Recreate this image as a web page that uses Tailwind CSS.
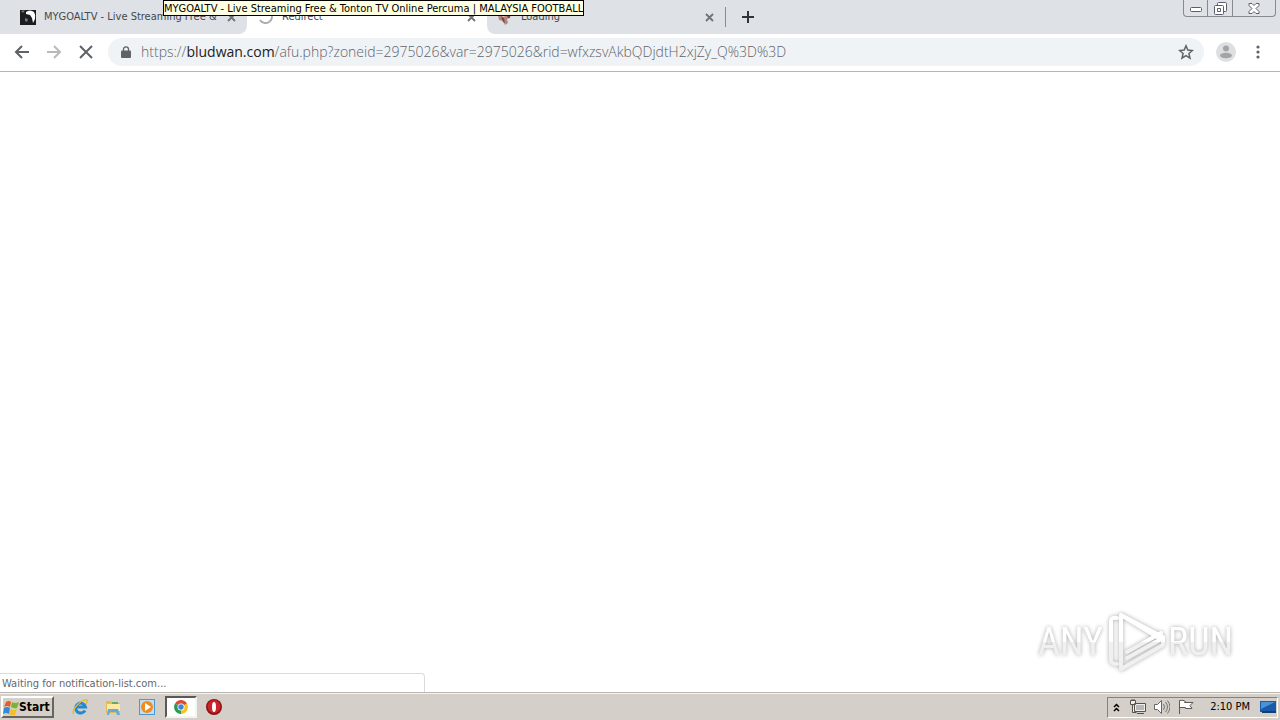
<!DOCTYPE html>
<html lang="en">
<head>
<meta charset="utf-8">
<title>Redirect</title>
<script src="https://cdn.jsdelivr.net/npm/@tailwindcss/browser@4"></script>
</head>
<body class="flex h-screen flex-col overflow-hidden bg-white font-['DejaVu_Sans_Condensed','DejaVu_Sans',sans-serif] text-[11px] text-black">
<header class="relative shrink-0">
  <div class="flex h-[34px] bg-white text-[#45494e]">
    <div class="flex w-[247px] shrink-0 items-center rounded-br-lg bg-[#dee1e6] pr-2 pl-5">
      <svg class="mr-2 size-4 shrink-0" viewBox="0 0 16 16"><path fill="#1b1d20" d="M0 1h16v15H0z"/><path fill="#fff" d="M6 3q4-3 8 0 2 3 1 7l-2 4-1-5-2-3-4-1z"/><path fill="#777" d="M1 2l4-1-2 3zM5 9l3 1-1 3-2-1z"/></svg>
      <span class="pt-px whitespace-nowrap">MYGOALTV - Live Streaming Free &amp;</span>
      <button aria-label="Close tab" class="ml-auto p-[3px]"><svg class="size-[9px]" viewBox="0 0 9 9"><path d="M1 1l7 7M8 1L1 8" stroke="#6f7378" stroke-width="1.800"/></svg></button>
    </div>
    <div class="flex w-60 shrink-0 items-center pr-2 pl-[11px]">
      <svg class="mr-2 size-4 shrink-0" viewBox="0 0 16 16"><path d="M13 4a6.200 6.200 0 0 1-11 7" fill="none" stroke="#a9adb1" stroke-width="2"/></svg>
      <span class="pt-px">Redirect</span>
      <button aria-label="Close tab" class="ml-auto p-[3px]"><svg class="size-[9px]" viewBox="0 0 9 9"><path d="M1 1l7 7M8 1L1 8" stroke="#6f7378" stroke-width="1.800"/></svg></button>
    </div>
    <div class="flex min-w-0 grow rounded-bl-lg bg-[#dee1e6]">
      <div class="flex w-[238px] shrink-0 items-center pr-2 pl-[10px]">
        <svg class="mr-2 size-4 shrink-0" viewBox="0 0 16 16"><path fill="#b9857f" d="M1 6l4-4 9 3-1 4-3 1 1 4-3 2-2-4-4-1z"/><path fill="#784d50" d="M4 8l3 1 1 5-2-1zM10 7h3v2h-2z"/><path fill="#ead4d3" d="M5 6l3-2 1 3-3 1z"/></svg>
        <span class="pt-px">Loading</span>
        <button aria-label="Close tab" class="ml-auto p-[3px]"><svg class="size-[9px]" viewBox="0 0 9 9"><path d="M1 1l7 7M8 1L1 8" stroke="#6f7378" stroke-width="1.800"/></svg></button>
      </div>
      <div class="my-[7px] w-px bg-[#898c90]"></div>
      <button aria-label="New tab" class="ml-4"><svg class="size-3" viewBox="0 0 12 12"><path d="M6 0v12M0 6h12" stroke="#303338" stroke-width="2"/></svg></button>
      <div class="mr-1 ml-auto flex h-[17px] rounded-b border border-t-0 border-[#878a91]">
        <button aria-label="Minimize" class="flex w-6 items-center justify-center border-r border-[#878a91]"><svg class="mt-[3px] h-[5px] w-3" viewBox="0 0 12 5"><rect x=".5" y=".5" width="11" height="4" rx="1" fill="#fff" stroke="#5b5f6b"/></svg></button>
        <button aria-label="Restore" class="flex w-[25px] items-center justify-center border-r border-[#878a91]"><svg class="size-[14px]" viewBox="0 0 14 14"><g fill="#fff" stroke="#5b5f6b"><rect x="4.500" y="1.500" width="9" height="9" rx="1"/><rect x="1.500" y="4.500" width="9" height="9" rx="1"/><path d="M4.500 7.500h3v3h-3z"/></g></svg></button>
        <button aria-label="Close" class="flex w-[42px] items-center justify-center"><svg class="h-[11px] w-3" viewBox="0 0 12 11"><path d="M1 .5h3l2 2 2-2h3v2l-3 3 3 3v2H8l-2-2-2 2H1v-2l3-3-3-3z" fill="#fff" stroke="#5b5f6b"/></svg></button>
      </div>
    </div>
  </div>
  <div class="flex h-[38px] items-center border-b border-[#b5b5b5] px-[14px] pb-px">
    <button aria-label="Back" class="mr-4"><svg class="size-4" viewBox="0 0 16 16"><path d="M15 8H2M8 2L2 8l6 6" fill="none" stroke="#5f6266" stroke-width="2"/></svg></button>
    <button aria-label="Forward" class="mr-4"><svg class="size-4" viewBox="0 0 16 16"><path d="M1 8h13M8 2l6 6-6 6" fill="none" stroke="#b8babc" stroke-width="2"/></svg></button>
    <button aria-label="Stop" class="mr-[14px]"><svg class="size-4" viewBox="0 0 16 16"><path d="M2 2l12 12M14 2L2 14" stroke="#5f6266" stroke-width="2"/></svg></button>
    <div class="flex h-7 min-w-0 grow items-center rounded-full bg-[#f0f3f5] pr-[10px] pl-[13px]">
      <svg class="mr-[10px] h-3 w-[10px]" viewBox="0 0 10 12"><path fill="#5f6368" d="M1 4.500h8q1 0 1 1V11q0 1-1 1H1q-1 0-1-1V5.500q0-1 1-1"/><path d="M2.500 5V3.300a2.500 2.500 0 0 1 5 0V5" fill="none" stroke="#5f6368" stroke-width="1.300"/></svg>
      <a href="#" class="grow font-['Open_Sans',sans-serif] text-[14px] leading-5 font-light whitespace-nowrap text-[#5f6469]">https://<span class="font-normal text-[#202124]">bludwan.com</span>/afu.php?zoneid=2975026&amp;var=2975026&amp;rid=wfxzsvAkbQDjdtH2xjZy_Q%3D%3D</a>
      <button aria-label="Bookmark this page"><svg class="size-4" viewBox="0 0 16 16"><path d="M8 1.800l1.800 4.300 4.600.4-3.500 3 1.100 4.600L8 11.700l-4 2.400 1.100-4.600-3.500-3 4.600-.4z" fill="none" stroke="#5f6266" stroke-width="1.500"/></svg></button>
    </div>
    <button aria-label="Profile" class="ml-3"><svg class="size-5" viewBox="0 0 20 20"><circle cx="10" cy="10" r="10" fill="#dddfe0"/><circle cx="10" cy="6.500" r="3" fill="#a2a5a8"/><ellipse cx="10" cy="13.500" rx="6" ry="2.800" fill="#a2a5a8"/></svg></button>
    <button aria-label="Menu" class="ml-[14px]"><svg class="h-[14px] w-4" viewBox="0 0 16 14"><g fill="#5f6266"><circle cx="8" cy="2" r="1.600"/><circle cx="8" cy="7" r="1.600"/><circle cx="8" cy="12" r="1.600"/></g></svg></button>
  </div>
  <div role="tooltip" class="absolute top-0 left-[163px] h-4 border border-black bg-[#ffffe1] leading-[15px] whitespace-nowrap">MYGOALTV - Live Streaming Free &amp; Tonton TV Online Percuma | MALAYSIA FOOTBALL</div>
</header>
<main class="relative min-h-0 grow bg-white">
  <div role="status" class="absolute bottom-0 left-0 h-[19px] w-[425px] rounded-tr border-t border-r border-[#d9dbdd] bg-white pl-[2px] leading-[19px] text-[#65686c]">Waiting for notification-list.com...</div>
  <svg role="img" aria-label="ANY RUN" class="absolute right-10 bottom-4 h-[70px] w-[210px] drop-shadow-[0_0_2px_#aaaaaa]" viewBox="0 0 210 70">
    <defs><linearGradient id="silver" gradientUnits="userSpaceOnUse" x1="0" y1="0" x2="0" y2="70"><stop offset=".51" stop-color="#fff"/><stop offset=".52" stop-color="#f0f0f0"/></linearGradient></defs>
    <g fill="url(#silver)" font-size="38" class="font-['Liberation_Sans_Narrow','Roboto_Condensed','Liberation_Sans',sans-serif]">
      <text x="8" y="49">ANY</text><text x="138" y="49">RUN</text>
    </g>
    <g fill="none" stroke="url(#silver)" stroke-linejoin="round" stroke-linecap="round" stroke-width="4"><path d="M87 12q-6-1-6 3v39q0 4 6 4"/><path d="M91 56V9l38 23M97 46l34-19M91 9l42 22M91 56v7l42-24v-7l-36 20"/></g>
  </svg>
</main>
<footer class="flex h-7 shrink-0 items-center border-t border-[#b8b5ae] bg-[#d4cfc8] pr-[2px] pl-px shadow-[inset_0_1px_0_#f5f4f2]">
  <button class="mt-px flex h-[22px] w-[53px] items-center border-2 border-t-white border-r-[#68645f] border-b-[#68645f] border-l-white font-bold"><svg class="size-[17px] shrink-0" viewBox="0 0 17 17"><path fill="#e85d23" d="M3 3q3-2 5 0L7 8Q4 6 1 8z"/><path fill="#76b72e" d="M9 3q3 2 7 0l-2 6q-3 1-6-1z"/><path fill="#348bd4" d="M1 9q3-2 6 0l-1 6q-3-2-6 0z"/><path fill="#f5bf22" d="M8 10q3 2 6 0l-2 6q-3 1-6-1z"/></svg><span class="-ml-px text-[12px]">Start</span></button>
  <nav class="mt-px flex items-center">
    <button aria-label="Internet Explorer" class="ml-[18px]"><svg class="size-4" viewBox="0 0 16 16"><path d="M13 11.500A5 5 0 1 1 13.500 8H4" fill="none" stroke="#218bd1" stroke-width="3"/><path d="M2 15C-2 12 9 0 15 1q1 1-1 4" fill="none" stroke="#e5b72c" stroke-width="1.300"/></svg></button>
    <button aria-label="File Explorer" class="ml-[17px]"><svg class="size-4" viewBox="0 0 16 16"><path fill="#e2bd57" d="M1 2h5l1 2h8v10H1z"/><path fill="#fbeaa3" d="M2 5h13v7H2z"/><path fill="#65aad8" d="M2 16l1-6h10l2 6h-3l-1-3H5l-1 3z"/><path fill="#68a95d" d="M7 3h6v2H7z"/></svg></button>
    <button aria-label="Media Player" class="ml-[18px]"><svg class="size-4" viewBox="0 0 16 16"><path fill="#4999d5" d="M0 0h16v16H0z"/><path fill="#c3dded" d="M1 1h14v14H1z"/><circle cx="8" cy="8" r="6" fill="#ee8c20"/><path fill="#fff" d="M6 4l6 4-6 4z"/></svg></button>
    <button aria-label="Google Chrome" class="ml-[10px] flex h-[22px] w-8 items-center justify-center border-2 border-t-[#5c5955] border-r-[#f5f4f2] border-b-[#f5f4f2] border-l-[#5c5955] bg-white"><svg class="size-[14px]" viewBox="0 0 14 14"><path fill="#df4937" d="M7 7L1 3.500a7 7 0 0 1 12 0z"/><path fill="#f4c61c" d="M7 7l6-3.500A7 7 0 0 1 7 14z"/><path fill="#279b50" d="M7 7v7A7 7 0 0 1 1 3.500z"/><circle cx="7" cy="7" r="3.500" fill="#fff"/><circle cx="7" cy="7" r="2.700" fill="#4285dc"/></svg></button>
    <button aria-label="Opera" class="ml-[9px]"><svg class="size-4" viewBox="0 0 16 16"><circle cx="8" cy="8" r="8" fill="#8f1317"/><circle cx="8" cy="7.500" r="6.500" fill="#c9262a"/><ellipse cx="8" cy="8" rx="2" ry="5" fill="#fff"/></svg></button>
  </nav>
  <div class="mt-px ml-auto flex h-[21px] items-center border border-t-[#85817b] border-r-white border-b-white border-l-[#85817b] pr-px pl-[5px]">
    <button aria-label="Show hidden icons"><svg class="h-[9px] w-[7px]" viewBox="0 0 7 9"><path d="M1 4l2.500-2.500L6 4M1 8l2.500-2.500L6 8" fill="none" stroke="#000" stroke-width="1.500"/></svg></button>
    <svg class="ml-[10px] size-4" viewBox="0 0 16 16"><path fill="#eee" stroke="#55534f" d="M4.500 4.500h11v8h-11zM7 14.500h7M.5 1.500h5v4h-5zM2.500 5.500v8h4"/><path d="M2 0v2M4 0v2" stroke="#55534f"/><path fill="#b9b8b5" d="M6 6h8v5H6z"/></svg>
    <svg class="ml-2 size-4" viewBox="0 0 16 16"><path fill="#fff" stroke="#686661" d="M.5 5.500h3l4-4v13l-4-4h-3z"/><path d="M9.500 5q2 3 0 6M11.500 3q4 5 0 10M13.500 1.500q5 6.500 0 13" fill="none" stroke="#77746f"/></svg>
    <svg class="ml-2 size-4" viewBox="0 0 16 16"><path fill="#fff" stroke="#5d5a56" d="M1.500 15V1.500q4-1 6 1l-1 1H15l-3 3 2 3H7.500v-1h-6"/></svg>
    <time class="mr-[10px] ml-4 whitespace-nowrap">2:10 PM</time>
    <button aria-label="Show desktop"><svg class="h-[14px] w-4" viewBox="0 0 16 14"><path fill="#185ba9" d="M0 1h16v11H0z"/><path fill="#4b91d7" d="M1 2h14L1 9z"/><path fill="#153e74" d="M2 11h14v2H2z"/></svg></button>
  </div>
</footer>
</body>
</html>
